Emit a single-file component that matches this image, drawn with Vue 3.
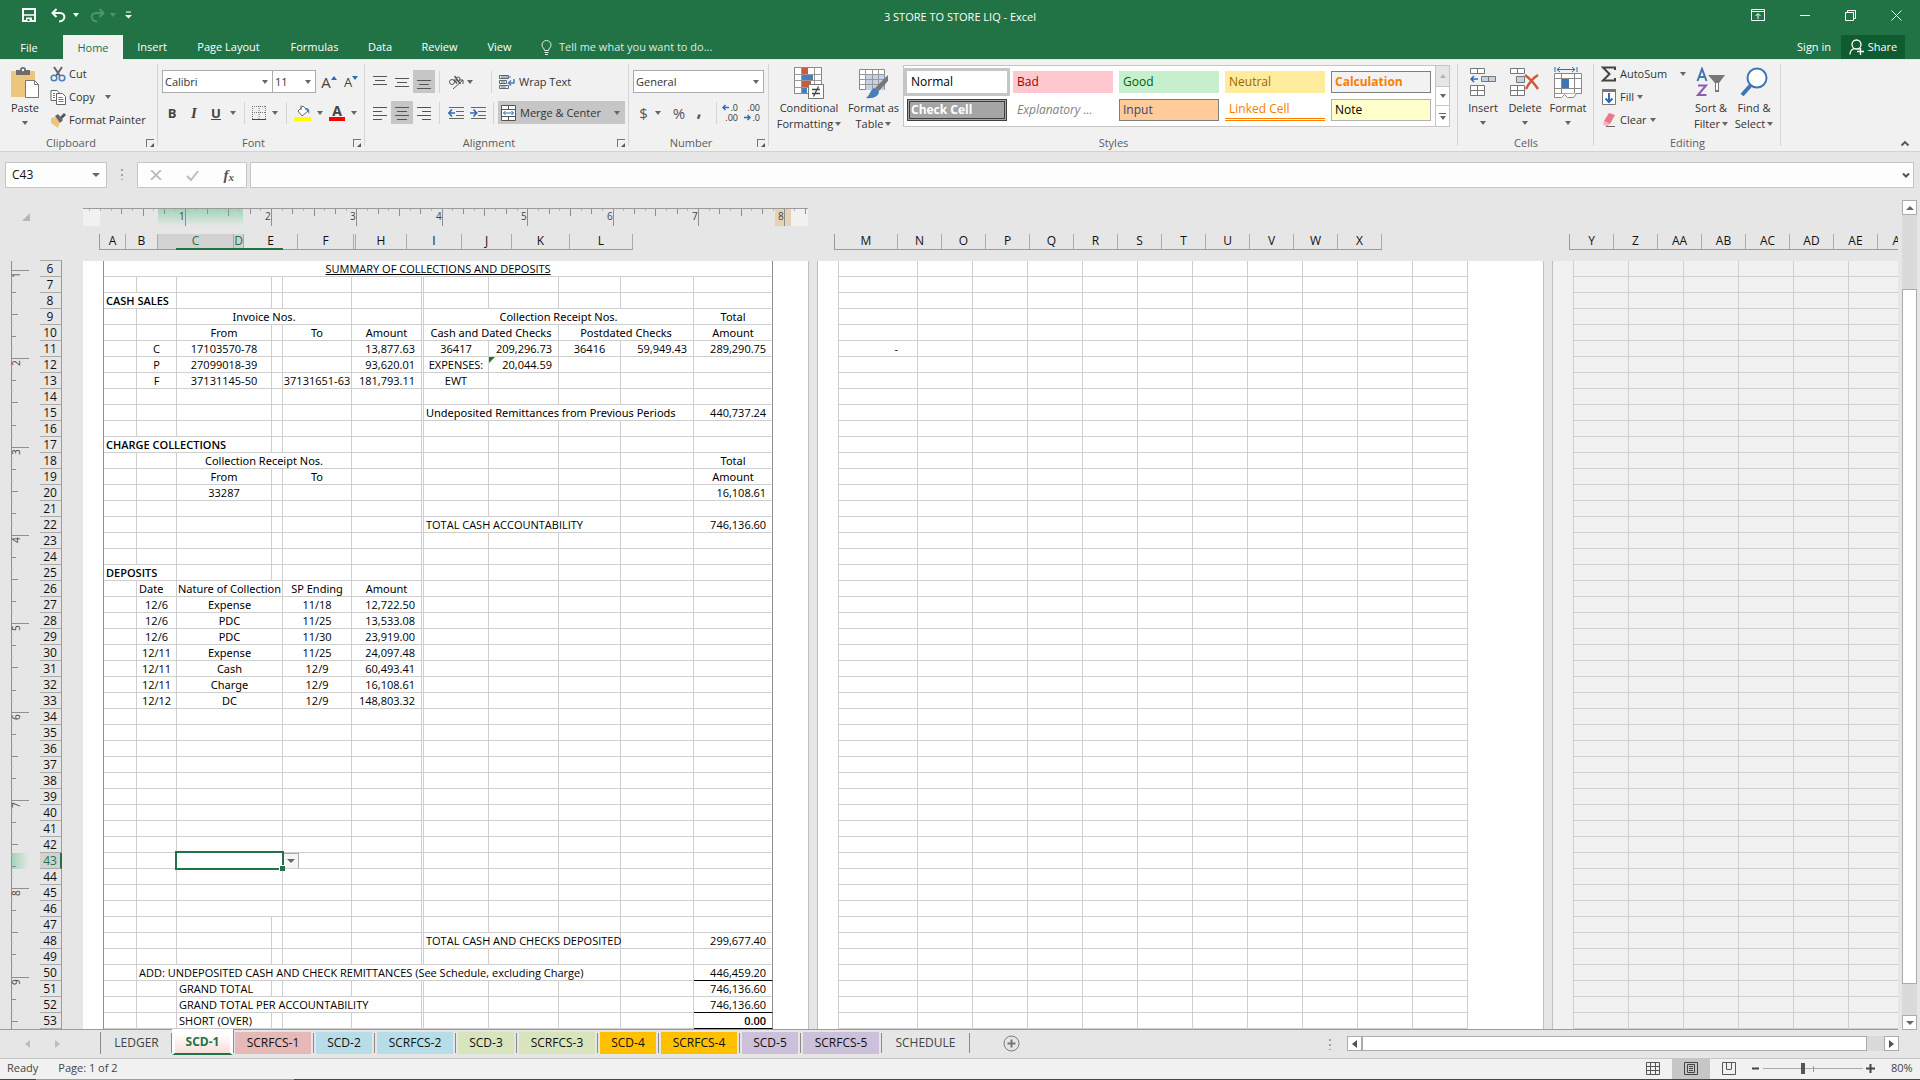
<script setup>
const tabs = [
  { name: 'Insert', w: 58 }, { name: 'Page Layout', w: 95 }, { name: 'Formulas', w: 77 },
  { name: 'Data', w: 54 }, { name: 'Review', w: 65 }, { name: 'View', w: 55 },
]

const styleCells = [
  { t: 'Normal', c: 'normal' }, { t: 'Bad', c: 'bad' }, { t: 'Good', c: 'good' },
  { t: 'Neutral', c: 'neutral' }, { t: 'Calculation', c: 'calculation' },
  { t: 'Check Cell', c: 'check' }, { t: 'Explanatory ...', c: 'explain' }, { t: 'Input', c: 'inputs' },
  { t: 'Linked Cell', c: 'linked' }, { t: 'Note', c: 'note' },
]

const headA = [
  { n: 'A', w: 26 }, { n: 'B', w: 32 }, { n: 'C', w: 76, on: true }, { n: 'D', w: 10, on: true },
  { n: 'E', w: 54 }, { n: 'F', w: 56 }, { n: '', w: 2 }, { n: 'H', w: 51 }, { n: 'I', w: 55 },
  { n: 'J', w: 50 }, { n: 'K', w: 58 }, { n: 'L', w: 63 },
]
const headB = [{ n: 'M', w: 63 }, ...'NOPQRSTUVWX'.split('').map((n) => ({ n, w: 44 }))]
const headC = ['Y', 'Z', 'AA', 'AB', 'AC', 'AD', 'AE', 'AF'].map((n) => ({ n, w: 44 }))

const colsA = [33, 40, 95, 11, 69, 70, 2, 65, 70, 62, 73, 79]
const colsB = [79, ...Array(10).fill(55)]
const colsC = Array(6).fill(55)

const rowNumbers = Array.from({ length: 48 }, (_, i) => i + 6)

// Filled cells of the first page: row -> list of [first column, span, text, classes]
const filled = {
  6: [[0, 12, 'SUMMARY OF COLLECTIONS AND DEPOSITS', 'mid under']],
  8: [[0, 2, 'CASH SALES', 'bold']],
  9: [[2, 3, 'Invoice Nos.', 'mid words'], [7, 4, 'Collection Receipt Nos.', 'mid words'], [11, 1, 'Total', 'mid words']],
  10: [[2, 1, 'From', 'mid words'], [4, 1, 'To', 'mid words'], [5, 1, 'Amount', 'mid words'], [7, 2, 'Cash and Dated Checks', 'mid words'], [9, 2, 'Postdated Checks', 'mid words'], [11, 1, 'Amount', 'mid words']],
  11: [[1, 1, 'C', 'mid'], [2, 1, '17103570-78', 'mid'], [5, 1, '13,877.63', 'end'], [7, 1, '36417', 'mid'], [8, 1, '209,296.73', 'end'], [9, 1, '36416', 'mid'], [10, 1, '59,949.43', 'end'], [11, 1, '289,290.75', 'end']],
  12: [[1, 1, 'P', 'mid'], [2, 1, '27099018-39', 'mid'], [5, 1, '93,620.01', 'end'], [7, 1, 'EXPENSES:', 'mid'], [8, 1, '20,044.59', 'end flag']],
  13: [[1, 1, 'F', 'mid'], [2, 1, '37131145-50', 'mid'], [4, 1, '37131651-63', 'mid'], [5, 1, '181,793.11', 'end'], [7, 1, 'EWT', 'mid']],
  15: [[7, 4, 'Undeposited Remittances from Previous Periods', 'words'], [11, 1, '440,737.24', 'end']],
  17: [[0, 3, 'CHARGE COLLECTIONS', 'bold']],
  18: [[2, 3, 'Collection Receipt Nos.', 'mid words'], [11, 1, 'Total', 'mid words']],
  19: [[2, 1, 'From', 'mid words'], [4, 1, 'To', 'mid words'], [11, 1, 'Amount', 'mid words']],
  20: [[2, 1, '33287', 'mid'], [11, 1, '16,108.61', 'end']],
  22: [[7, 3, 'TOTAL CASH ACCOUNTABILITY', ''], [11, 1, '746,136.60', 'end']],
  25: [[0, 2, 'DEPOSITS', 'bold']],
  26: [[1, 1, 'Date', 'words'], [2, 2, 'Nature of Collection', 'mid words'], [4, 1, 'SP Ending', 'mid words'], [5, 1, 'Amount', 'mid words']],
  48: [[7, 3, 'TOTAL CASH AND CHECKS DEPOSITED', 'spill'], [11, 1, '299,677.40', 'end']],
  50: [[1, 9, 'ADD: UNDEPOSITED CASH AND CHECK REMITTANCES (See Schedule, excluding Charge)', ''], [11, 1, '446,459.20', 'end rule']],
  51: [[2, 1, 'GRAND TOTAL', ''], [11, 1, '746,136.60', 'end']],
  52: [[2, 4, 'GRAND TOTAL PER ACCOUNTABILITY', ''], [11, 1, '746,136.60', 'end rule']],
  53: [[2, 1, 'SHORT (OVER)', ''], [11, 1, '0.00', 'end bold rule']],
}
const deposits = [
  ['12/6', 'Expense', '11/18', '12,722.50'],
  ['12/6', 'PDC', '11/25', '13,533.08'],
  ['12/6', 'PDC', '11/30', '23,919.00'],
  ['12/11', 'Expense', '11/25', '24,097.48'],
  ['12/11', 'Cash', '12/9', '60,493.41'],
  ['12/11', 'Charge', '12/9', '16,108.61'],
  ['12/12', 'DC', '12/9', '148,803.32'],
]
deposits.forEach((d, i) => {
  filled[27 + i] = [[1, 1, d[0], 'mid'], [2, 2, d[1], 'mid words'], [4, 1, d[2], 'mid'], [5, 1, d[3], 'end']]
})
for (let r = 34; r <= 46; r++) filled[r] = [[2, 2, '', r === 43 ? 'picked' : '']]

const rowsA = rowNumbers.map((n) => {
  const out = []
  let c = 0
  const list = filled[n] || []
  while (c < 12) {
    const hit = list.find((x) => x[0] === c)
    if (hit) {
      out.push({ span: hit[1], text: hit[2], cls: hit[3] })
      c += hit[1]
    } else {
      out.push({ span: 1, text: '', cls: '' })
      c++
    }
  }
  return { n, cells: out }
})

const tickLength = (i) => (i % 8 === 0 ? 18 : i % 4 === 0 ? 7 : i % 2 === 0 ? 5 : 2)
const hTicks = Array.from({ length: 68 }, (_, k) => k - 1).map((i) => ({
  x: Math.round(17 + i * 10.68), len: i === 0 ? 2 : tickLength(i), n: i > 0 && i % 8 === 0 ? i / 8 : '',
}))
const vTicks = Array.from({ length: 70 }, (_, k) => k + 8).map((i) => ({
  y: Math.round(9 + (i - 8) * 11.04), len: tickLength(i), n: i % 8 === 0 ? i / 8 : '',
}))

const sheets = [
  { n: 'SCRFCS-1', c: 'rose', w: 76 }, { n: 'SCD-2', c: 'aqua', w: 56 }, { n: 'SCRFCS-2', c: 'aqua', w: 76 },
  { n: 'SCD-3', c: 'lime', w: 56 }, { n: 'SCRFCS-3', c: 'lime', w: 76 }, { n: 'SCD-4', c: 'gold', w: 56 },
  { n: 'SCRFCS-4', c: 'gold', w: 76 }, { n: 'SCD-5', c: 'lilac', w: 56 }, { n: 'SCRFCS-5', c: 'lilac', w: 76 },
  { n: 'SCHEDULE', c: 'plain', w: 83 },
]
</script>

<template>
  <div class="app">
    <header class="top">
      <div class="titlebar">
        <div class="quick">
          <button aria-label="Save"><svg width="14" height="14" viewBox="0 0 14 14"><path d="M1 1h12v12H1z" fill="none" stroke="#fff" stroke-width="2" /><path d="M2 7h10" stroke="#fff" stroke-width="1.5" /><path d="M4 9.5h6V14H4z" fill="#fff" /><path d="M5.5 11h2v2h-2z" fill="#217346" /></svg></button>
          <button aria-label="Undo" class="undo"><svg width="16" height="15" viewBox="0 0 16 15" fill="none" stroke="#fff" stroke-width="2"><path d="M5.5 1L1.5 5l4 4M2 5h7c6 0 6 8-1 8.5" /></svg></button>
          <i class="arr white"></i>
          <button aria-label="Redo" class="redo"><svg width="16" height="15" viewBox="0 0 16 15" fill="none" stroke="#4f9470" stroke-width="2"><path d="M10.500 1l4 4-4 4M14 5H7c-6 0-6 8 1 8.500" /></svg></button>
          <i class="arr dim"></i>
          <button aria-label="Customize Quick Access Toolbar" class="custom"><svg width="7" height="8" viewBox="0 0 7 8"><path d="M1 1h5" stroke="#fff" /><path d="M0 4h7L3.500 7.500z" fill="#fff" /></svg></button>
        </div>
        <h1>3 STORE TO STORE LIQ - Excel</h1>
        <div class="winbtns">
          <button aria-label="Ribbon Display Options"><svg width="14" height="12" viewBox="0 0 14 12" fill="none" stroke="#fff"><path d="M.5.5h13v11H.5zM.5 2.500h13M7 10V5M4.500 7L7 4.500 9.500 7" /></svg></button>
          <button aria-label="Minimize"><svg width="10" height="10" viewBox="0 0 10 10"><path d="M0 5.500h10" stroke="#fff" /></svg></button>
          <button aria-label="Restore"><svg width="11" height="11" viewBox="0 0 11 11" fill="none" stroke="#fff"><path d="M.5 2.500h8v8h-8zM2.500 2.500v-2h8v8h-2" /></svg></button>
          <button aria-label="Close"><svg width="11" height="11" viewBox="0 0 11 11"><path d="M.5.5l10 10M10.500.5l-10 10" stroke="#fff" /></svg></button>
        </div>
      </div>
      <nav class="tabs">
        <button class="tab file">File</button>
        <button class="tab home">Home</button>
        <button v-for="t in tabs" :key="t.name" class="tab" :style="{ width: t.w + 'px' }">{{ t.name }}</button>
        <button class="tell"><svg width="11" height="15" viewBox="0 0 11 15" fill="none" stroke="#e0ede5"><path d="M3.500 10.500C3.500 8 1 8 1 5a4.500 4.500 0 0 1 9 0c0 3-2.500 3-2.500 5.500zM3.500 12.500h4M4 14.500h3" /></svg>Tell me what you want to do...</button>
        <span class="grow"></span>
        <a href="#" class="signin">Sign in</a>
        <button class="share"><svg width="16" height="16" viewBox="0 0 16 16" fill="none" stroke="#fff" stroke-width="1.300"><circle cx="7.500" cy="5.500" r="4.500" /><path d="M1 15.500c0-3 1.500-5 4-6M9.500 9.500l1 1M8 12.500h7M11.500 9v7" /></svg>Share</button>
      </nav>
    </header>

    <section class="ribbon">
      <div class="group g-clip">
        <div class="body">
          <button class="big paste">
            <svg width="30" height="32" viewBox="0 0 30 32"><path d="M1 4h24v26H1z" fill="#edc57c" /><path d="M6 3h4a3 3 0 0 1 6 0h4v5H6z" fill="#6d6d6d" /><circle cx="13" cy="3" r="1.200" fill="#fff" /><path d="M15.500 13.500h9l4 4v13h-13z" fill="#fff" stroke="#777" /><path d="M24.500 13.500v4h4" fill="none" stroke="#777" /></svg>
            <span>Paste</span><i class="arr"></i>
          </button>
          <div class="stack">
            <button><svg width="16" height="16" viewBox="0 0 16 16"><path d="M4 1l6 9M12 1L6 10" stroke="#666" stroke-width="2" /><circle cx="4" cy="12" r="2.800" fill="none" stroke="#4a7ebb" stroke-width="1.500" /><circle cx="12" cy="12" r="2.800" fill="none" stroke="#4a7ebb" stroke-width="1.500" /></svg>Cut</button>
            <button><svg width="16" height="16" viewBox="0 0 16 16" fill="#fff" stroke="#666"><path d="M1 1.500h6l2 2v8H1z" /><path d="M6.500 4.500h6l3 3v8h-9z" /><path d="M8.500 8.500h4M8.500 10.500h5M8.500 12.500h5M3 4.500h2M3 6.500h2M3 8.500h2" stroke="#4a7ebb" /></svg>Copy<i class="arr far"></i></button>
            <button><svg width="16" height="16" viewBox="0 0 16 16"><path d="M1 6l4-1 5 5-2 6-7-5z" fill="#edc57c" /><path d="M5 4l3-2 5 6-3 3z" fill="#666" /><path d="M10 5l4-4 2 2-4 4z" fill="#555" /></svg>Format Painter</button>
          </div>
        </div>
        <footer class="with-launch">Clipboard<i class="launch"></i></footer>
      </div>

      <div class="group g-font">
        <div class="lines">
          <div class="line">
            <label class="combo w111"><select aria-label="Font"><option>Calibri</option></select><i class="arr"></i></label>
            <label class="combo w43"><select aria-label="Font size"><option>11</option></select><i class="arr"></i></label>
            <button class="glyph big-a">A<svg width="6" height="4"><path d="M0 4h6L3 0z" fill="#2b6cb5" /></svg></button>
            <button class="glyph small-a">A<svg width="6" height="4"><path d="M0 0h6L3 4z" fill="#2b6cb5" /></svg></button>
          </div>
          <div class="line low">
            <button class="letter b">B</button><button class="letter i">I</button><button class="letter u">U</button><i class="arr"></i>
            <s></s>
            <button class="tool"><svg width="14" height="14" viewBox="0 0 14 14" fill="none" stroke="#777"><path d="M.5 0v13M13.500 0v13M7 0v13M0 .5h14M0 6.500h14" stroke-dasharray="1 1" /><path d="M0 13.500h14" stroke="#444" /></svg></button><i class="arr"></i>
            <s></s>
            <button class="tool"><svg width="17" height="17" viewBox="0 0 17 17"><path d="M4 7l5-5 5 5-6 5z" fill="#fff" stroke="#666" /><path d="M7 6V1.500" stroke="#666" /><path d="M12 4c3 0 4 3 3 6-1-2-1-4-4-4z" fill="#4a7ebb" /><path d="M0 13h17v4H0z" fill="#ff0" /></svg></button><i class="arr"></i>
            <button class="tool fontcolor"><b>A</b></button><i class="arr"></i>
          </div>
        </div>
        <footer class="with-launch">Font<i class="launch"></i></footer>
      </div>

      <div class="group g-align">
        <div class="lines">
          <div class="line">
            <button class="sq"><svg width="14" height="14"><path d="M0 1.500h14M2 5.500h10M0 9.500h14" stroke="#555" /></svg></button>
            <button class="sq"><svg width="14" height="14"><path d="M0 3.500h14M2 7.500h10M0 11.500h14" stroke="#555" /></svg></button>
            <button class="sq on"><svg width="14" height="14"><path d="M0 5.500h14M2 9.500h10M0 13.500h14" stroke="#555" /></svg></button>
            <s></s>
            <button class="tool orient"><svg width="17" height="16" viewBox="0 0 17 16" fill="none" stroke="#555"><circle cx="4" cy="8" r="2.500" /><path d="M6 5.500l3 4M6.500 2l6 8" stroke-width="1.300" /><circle cx="10" cy="5" r="2" /><path d="M5 15L15 6M11.500 6H15v4" /></svg></button><i class="arr"></i>
            <s class="third"></s>
            <button class="wide"><svg width="16" height="16" viewBox="0 0 16 16" fill="none" stroke="#666"><path d="M.5 1.500h9v3h-9zM.5 6.500h7v3h-7zM.5 11.500h9v3h-9z" /><path d="M2 3h10M2 8h4M2 13h5" stroke="#4a7ebb" /><path d="M15 5v4h-5M12 6.500L9.500 9 12 11.500" stroke="#4a7ebb" stroke-width="1.500" /></svg>Wrap Text</button>
          </div>
          <div class="line low">
            <button class="sq"><svg width="14" height="14"><path d="M0 1.500h14M0 5.500h9M0 9.500h14M0 13.500h9" stroke="#555" /></svg></button>
            <button class="sq on"><svg width="14" height="14"><path d="M0 1.500h14M2 5.500h10M0 9.500h14M2 13.500h10" stroke="#555" /></svg></button>
            <button class="sq"><svg width="14" height="14"><path d="M0 1.500h14M5 5.500h9M0 9.500h14M5 13.500h9" stroke="#555" /></svg></button>
            <s></s>
            <button class="tool"><svg width="16" height="14" viewBox="0 0 16 14" fill="none"><path d="M1 1.500h15M8 5.500h8M8 9.500h8M1 12.500h15" stroke="#666" /><path d="M7 7H1M4 3.500L.800 7 4 10.500" stroke="#2b6cb5" stroke-width="1.600" /></svg></button>
            <button class="tool second"><svg width="16" height="14" viewBox="0 0 16 14" fill="none"><path d="M1 1.500h15M8 5.500h8M8 9.500h8M1 12.500h15" stroke="#666" /><path d="M0 7h6M3.500 3.500L6.700 7l-3.200 3.500" stroke="#2b6cb5" stroke-width="1.600" /></svg></button>
            <s class="third b"></s>
            <button class="wide on"><svg width="15" height="16" viewBox="0 0 15 16"><path d="M.5.5h14v15H.5zM.5 4.500h14M.5 11.500h14M7.500.5v4M7.500 11.500v4" fill="#fff" stroke="#555" /><path d="M2.500 8h10M4.500 6l-2 2 2 2M10.500 6l2 2-2 2" fill="none" stroke="#2b6cb5" /></svg>Merge &amp; Center<i class="arr"></i></button>
          </div>
        </div>
        <footer class="with-launch">Alignment<i class="launch"></i></footer>
      </div>

      <div class="group g-num">
        <div class="lines">
          <div class="line">
            <label class="combo w131"><select aria-label="Number format"><option>General</option></select><i class="arr"></i></label>
          </div>
          <div class="line low nums">
            <button class="sym">$</button><i class="arr"></i><button class="sym pct">%</button><button class="sym comma">,</button>
            <s></s>
            <button class="dec"><span><svg width="7" height="7" viewBox="0 0 7 7"><path d="M7 3.500H1M3.500 1L1 3.500 3.500 6" fill="none" stroke="#2b6cb5" stroke-width="1.500" /></svg>.0</span><span>.00</span></button>
            <button class="dec"><span>.00</span><span><svg width="7" height="7" viewBox="0 0 7 7"><path d="M0 3.500h6M3.500 1L6 3.500 3.500 6" fill="none" stroke="#2b6cb5" stroke-width="1.500" /></svg>.0</span></button>
          </div>
        </div>
        <footer class="with-launch">Number<i class="launch"></i></footer>
      </div>

      <div class="group g-style">
        <div class="body">
          <button class="big cond">
            <svg width="30" height="32" viewBox="0 0 30 32"><path d="M.5.5h27v26H.5z" fill="#fff" stroke="#888" /><path d="M8 1h6v6H8zM8 14h9v6H8z" fill="#d0593c" /><path d="M8 8h11v5H8zM8 20h5v6H8z" fill="#4a7ebb" /><path d="M7.500 0v26M.5 7.500h27M.5 13.500h27M.5 20.500h27M20.500 0v20" stroke="#999" /><path d="M14.500 17.500h15v14h-15z" fill="#fff" stroke="#777" /><path d="M18 22.500h8M18 26.500h8M24.500 19.500l-5 10" stroke="#444" stroke-width="1.300" /></svg>
            <span>Conditional</span><span>Formatting<i class="arr"></i></span>
          </button>
          <button class="big fmt">
            <svg width="30" height="32" viewBox="0 0 30 32"><path d="M.5 2.500h25v20H.5z" fill="#fff" stroke="#888" /><path d="M7 8h18v15H7z" fill="#c3d2e8" /><path d="M6.500 2.500v20M13.500 2.500v20M19.500 2.500v20M.5 7.500h25M.5 12.500h25M.5 17.500h25" stroke="#999" /><path d="M29 8v6l-9 10-4-3z" fill="#777" /><path d="M16 21c-5 1-4 6-9 10 8 1 13-2 13-7z" fill="#4a7ebb" /></svg>
            <span>Format as</span><span>Table<i class="arr"></i></span>
          </button>
          <div class="gallery">
            <div class="swatches">
              <button v-for="s in styleCells" :key="s.t" :class="s.c">{{ s.t }}</button>
            </div>
            <div class="gscroll"><button class="off" aria-label="Previous styles"><i class="arr up"></i></button><button aria-label="Next styles"><i class="arr"></i></button><button aria-label="More styles"><u></u><i class="arr"></i></button></div>
          </div>
        </div>
        <footer>Styles</footer>
      </div>

      <div class="group g-cells">
        <div class="body">
          <button class="big c1"><svg width="27" height="32" viewBox="0 0 27 32" fill="#fff" stroke="#777"><path d="M.5 1.500h14v5H.5zM7.500 1.500v5M.5 18.500h14v10H.5zM7.500 18.500v10M.5 23.500h14" /><path d="M11.500 9.500h14v5h-14zM18.500 9.500v5" fill="#c3d2e8" /><path d="M8 12H1M4 9l-3 3 3 3" fill="none" stroke="#2b6cb5" stroke-width="1.500" /></svg><span>Insert</span><i class="arr"></i></button>
          <button class="big c2"><svg width="30" height="32" viewBox="0 0 30 32" fill="#fff" stroke="#777"><path d="M.5 1.500h14v5H.5zM7.500 1.500v5M.5 18.500h14v10H.5zM7.500 18.500v10M.5 23.500h14" /><path d="M6.500 9.500h8v6h-8z" fill="#c3d2e8" /><path d="M15 8c4 3 9 8 13 14M28 8c-5 3-9 8-12 14" fill="none" stroke="#d0593c" stroke-width="2.500" /></svg><span>Delete</span><i class="arr"></i></button>
          <button class="big c3"><svg width="29" height="32" viewBox="0 0 29 32" fill="#fff" stroke="#888"><path d="M.5 6.500h27v20H.5zM7.500 6.500v20M20.500 6.500v20M.5 11.500h27M.5 21.500h27" /><path d="M8 12h7v9H8z" fill="#3f74b5" stroke="none" /><path d="M.5 27v3.500h7l3-3 3 3h6l3-4" /><path d="M1 0v5M23 0v5M3 2.500h18M6 0L3 2.500 6 5M18 0l3 2.500L18 5" fill="none" stroke="#2b6cb5" /></svg><span>Format</span><i class="arr"></i></button>
        </div>
        <footer>Cells</footer>
      </div>

      <div class="group g-edit">
        <div class="body">
          <div class="stack">
            <button><svg width="16" height="16" viewBox="0 0 16 16"><path d="M14 4V1.500H2L8.500 8 2 14.500h12V12" fill="none" stroke="#444" stroke-width="2" /></svg>AutoSum<i class="arr sum"></i></button>
            <button><svg width="16" height="16" viewBox="0 0 16 16"><path d="M1.500.5h13v15h-13z" fill="#fff" stroke="#777" /><path d="M1 0h14v3H1z" fill="#777" /><path d="M8 4v9M4.500 9.500L8 13l3.500-3.500" fill="none" stroke="#2b6cb5" stroke-width="2" /></svg>Fill<i class="arr near"></i></button>
            <button><svg width="16" height="16" viewBox="0 0 16 16"><path d="M8 1l6 2-5 9-6-3z" fill="#e8798c" /><path d="M3 9l6 3-3 2.500-4-2z" fill="#f3b3be" /><path d="M5 14.500h9" stroke="#666" /></svg>Clear<i class="arr near"></i></button>
          </div>
          <button class="big sort"><svg width="30" height="32" viewBox="0 0 30 32"><path d="M1.500 14L6 2l4.500 12M3 10h6" fill="none" stroke="#3f74b5" stroke-width="2" /><path d="M2 18.500h8L2 28h8.500" fill="none" stroke="#8e5bb5" stroke-width="2" /><path d="M12 8h17l-6 8v9h-4v-9z" fill="#777" /><path d="M20 16h2v7h-2z" fill="#fff" /></svg><span>Sort &amp;</span><span>Filter<i class="arr"></i></span></button>
          <button class="big find"><svg width="28" height="32" viewBox="0 0 28 32"><circle cx="17" cy="11" r="9.500" fill="#fff" stroke="#3f74b5" stroke-width="2" /><path d="M11 18L2 28" stroke="#3f74b5" stroke-width="4" /></svg><span>Find &amp;</span><span>Select<i class="arr"></i></span></button>
        </div>
        <footer>Editing</footer>
      </div>
      <span class="grow"></span>
      <button class="collapse" aria-label="Collapse the Ribbon"><svg width="10" height="7" viewBox="0 0 10 7"><path d="M1.500 5.500L5 2l3.500 3.500" fill="none" stroke="#555" stroke-width="1.800" /></svg></button>
    </section>

    <section class="formula">
      <label class="namebox"><input type="text" value="C43" aria-label="Name Box"><i class="arr wide5"></i></label>
      <span class="dots"></span>
      <div class="fxbox">
        <svg width="12" height="10" viewBox="0 0 12 10"><path d="M1 0l10 10M11 0L1 10" stroke="#bcbcbc" stroke-width="1.800" /></svg>
        <svg width="13" height="11" viewBox="0 0 13 11"><path d="M1 6l4 4 7-9" fill="none" stroke="#bcbcbc" stroke-width="2" /></svg>
        <span class="fx">f<sub>x</sub></span>
      </div>
      <label class="fbar"><input type="text" aria-label="Formula bar"><svg width="8" height="7" viewBox="0 0 8 7"><path d="M1 1.500l3 3 3-3" fill="none" stroke="#555" stroke-width="2" /></svg></label>
    </section>

    <main class="work">
      <div class="sheet">
        <div class="rulerrow">
          <div class="corner"><svg width="8" height="8"><path d="M8 0v8H0z" fill="#b5b5b5" /></svg></div>
          <div class="hruler">
            <span class="band edge"></span><span class="band sel"></span><span class="band tan"></span><span class="band edge last"></span>
            <svg width="725" height="18">
              <g v-for="t in hTicks" :key="t.x"><path :d="`M${t.x + 0.5} 0v${t.len}`" :stroke="t.len > 2 ? '#8f8f8f' : '#b5b5b5'" /><text v-if="t.n" :x="t.x - 6" y="11">{{ t.n }}</text></g>
            </svg>
          </div>
        </div>
        <div class="heads">
          <div class="hg first">
            <span v-for="h in headA" :key="h.n" :class="{ on: h.on }" :style="{ width: h.w + 'px' }">{{ h.n }}</span>
            <i class="selline"></i>
          </div>
          <div class="hg second"><span v-for="h in headB" :key="h.n" :style="{ width: h.w + 'px' }">{{ h.n }}</span></div>
          <div class="hg third"><span v-for="h in headC" :key="h.n" :style="{ width: h.w + 'px' }">{{ h.n }}</span></div>
        </div>
        <div class="pages">
          <div class="vruler">
            <span class="vsel"></span>
            <svg width="20" height="768">
              <path d="M.5 0v768" stroke="#8f8f8f" />
              <g v-for="t in vTicks" :key="t.y"><path :d="`M0 ${t.y + 0.5}h${t.len}`" :stroke="t.len > 2 ? '#8f8f8f' : '#b5b5b5'" /><text v-if="t.n" :transform="`translate(9 ${t.y + 8}) rotate(-90)`">{{ t.n }}</text></g>
            </svg>
          </div>
          <div class="rownums"><span v-for="n in rowNumbers" :key="n" :class="{ on: n === 43 }">{{ n }}</span></div>
          <div class="page one">
            <table>
              <colgroup><col v-for="(w, i) in colsA" :key="i" :style="{ width: w + 'px' }"></colgroup>
              <tbody>
                <tr v-for="r in rowsA" :key="r.n">
                  <td v-for="(c, i) in r.cells" :key="i" :colspan="c.span" :class="c.cls"><div v-if="c.text">{{ c.text }}</div><template v-if="c.cls === 'picked'"><span class="cursor"></span><button class="drop" aria-label="Choose from list"><i class="arr wide5"></i></button></template></td>
                </tr>
              </tbody>
            </table>
          </div>
          <div class="page two">
            <table>
              <colgroup><col v-for="(w, i) in colsB" :key="i" :style="{ width: w + 'px' }"></colgroup>
              <tbody><tr v-for="n in rowNumbers" :key="n"><td v-for="(w, i) in colsB" :key="i" class="end dash"><div v-if="n === 11 && i === 0">-</div></td></tr></tbody>
            </table>
          </div>
          <div class="page three">
            <table>
              <colgroup><col v-for="(w, i) in colsC" :key="i" :style="{ width: w + 'px' }"></colgroup>
              <tbody><tr v-for="n in rowNumbers" :key="n"><td v-for="(w, i) in colsC" :key="i"></td></tr></tbody>
            </table>
          </div>
        </div>
      </div>
      <div class="vscroll">
        <button aria-label="Scroll up"><i class="arr up wide5"></i></button>
        <div class="track"><div class="thumb"></div></div>
        <button aria-label="Scroll down"><i class="arr wide5"></i></button>
      </div>
    </main>

    <section class="sheettabs">
      <button class="nav" aria-label="Previous sheet"><svg width="5" height="8"><path d="M5 0v8L0 4z" fill="#bdbdbd" /></svg></button>
      <button class="nav" aria-label="Next sheet"><svg width="5" height="8"><path d="M0 0v8l5-4z" fill="#bdbdbd" /></svg></button>
      <button class="st ledger">LEDGER</button>
      <button class="st active">SCD-1</button>
      <button v-for="s in sheets" :key="s.n" class="st" :class="s.c" :style="{ width: s.w + 'px' }">{{ s.n }}</button>
      <button class="add" aria-label="New sheet"><svg width="17" height="17" viewBox="0 0 17 17" fill="none" stroke="#777"><circle cx="8.500" cy="8.500" r="7.500" /><path d="M8.500 4.500v8M4.500 8.500h8" stroke-width="2" /></svg></button>
      <span class="grow"></span>
      <span class="dots"></span>
      <div class="hscroll">
        <button aria-label="Scroll left"><svg width="5" height="8"><path d="M5 0v8L0 4z" fill="#555" /></svg></button>
        <div class="hthumb"></div><div class="hrest"></div>
        <button aria-label="Scroll right"><svg width="5" height="8"><path d="M0 0v8l5-4z" fill="#555" /></svg></button>
      </div>
    </section>

    <footer class="status">
      <span class="ready">Ready</span><span>Page: 1 of 2</span>
      <span class="grow"></span>
      <button aria-label="Normal view"><svg width="14" height="13" viewBox="0 0 14 13"><path d="M.5.5h13v12H.5zM4.500 0v13M9.500 0v13M0 4.500h14M0 8.500h14" fill="none" stroke="#555" /></svg></button>
      <button class="on" aria-label="Page Layout view"><svg width="14" height="13" viewBox="0 0 14 13"><path d="M.5.5h13v12H.5zM3.500 2.500h7v8h-7zM5 4.500h4M5 6.500h4M5 8.500h4" fill="none" stroke="#444" /></svg></button>
      <button aria-label="Page Break Preview"><svg width="14" height="13" viewBox="0 0 14 13"><path d="M.5.5h13v12H.5zM4.500 0v7M4.500 7.500h5M9.500 0v7" fill="none" stroke="#555" /></svg></button>
      <button class="zb out" aria-label="Zoom out"><svg width="7" height="9"><path d="M0 4.500h7" stroke="#444" stroke-width="2" /></svg></button>
      <input type="range" min="0" max="100" value="40" aria-label="Zoom">
      <button class="zb in" aria-label="Zoom in"><svg width="9" height="9"><path d="M0 4.500h9M4.500 0v9" stroke="#444" stroke-width="2" /></svg></button>
      <span class="pc">80%</span>
    </footer>
    <div class="edge-strip"><span></span></div>
  </div>
</template>

<style>
body { margin: 0; background: #e6e6e6; }
</style>

<style scoped>
* { box-sizing: border-box; }
.app { min-height: 100vh; display: flex; flex-direction: column; font: 11px/16px "Open Sans", "Noto Sans", sans-serif; color: #333; background: #e6e6e6; overflow: hidden; }
button { font: inherit; color: inherit; border: 0; background: none; padding: 0; display: flex; align-items: center; justify-content: center; white-space: nowrap; flex: none; }
input, select { font: inherit; color: inherit; border: 0; background: none; padding: 0; margin: 0; outline: 0; appearance: none; min-width: 0; border-radius: 0; }
svg { display: block; flex: none; }
.grow { flex: 1; }
.arr { flex: none; width: 0; height: 0; border: 3px solid transparent; border-top: 4px solid #666; border-bottom: 0; }
.arr.wide5 { border-width: 4px 4px 0; }
.arr.up { border-top: 0; border-bottom: 4px solid #666; }
.arr.white { border-top-color: #fff; }
.arr.dim { border-top-color: #4f9470; }

.top { background: #217346; color: #fff; height: 60px; display: flex; flex-direction: column; border-bottom: 1px solid #d9ede1; }
.titlebar { height: 35px; padding-bottom: 5px; display: grid; grid-template-columns: 1fr auto 1fr; align-items: center; }
.titlebar h1 { margin: 4px 0 0; font-size: 11px; font-weight: 400; line-height: 16px; }
.quick { display: flex; align-items: center; padding-left: 22px; }
.undo { margin: 0 6px 0 15px; }
.redo { margin: 0 5px 0 10px; }
.custom { margin-left: 9px; }
.winbtns { display: flex; justify-content: flex-end; gap: 35px; padding-right: 18px; }
.tabs { display: flex; height: 24px; align-items: stretch; }
.file { width: 63px; padding-right: 5px; padding-top: 1px; }
.home { width: 60px; background: #f1f1f1; color: #217346; height: 25px; }
.tell { gap: 7px; margin-left: 14px; color: #dcebe2; }
.signin { color: #fff; text-decoration: none; align-self: center; margin-right: 10px; }
.share { background: #0e5c2f; width: 64px; gap: 3px; margin-right: 15px; }

.ribbon { height: 92px; background: #f1f1f1; border-bottom: 1px solid #d2d2d2; display: flex; }
.group { position: relative; display: flex; flex-direction: column; justify-content: space-between; padding-top: 2px; flex: none; }
.group::after { content: ""; position: absolute; right: 0; top: 4px; bottom: 5px; width: 1px; background: #d5d5d5; }
.group > footer { height: 16px; display: flex; justify-content: center; color: #5c5c5c; }
.group > .with-launch { padding-right: 16px; }
.launch { position: absolute; right: 4px; bottom: 4px; width: 8px; height: 8px; border: 1px solid #777; border-right: 0; border-bottom: 0; }
.launch::after { content: ""; position: absolute; right: 0; bottom: 0; border: 2px solid transparent; border-right-color: #555; border-bottom-color: #555; }
.g-clip { width: 158px; } .g-font { width: 207px; } .g-align { width: 264px; } .g-num { width: 140px; }
.g-style { width: 689px; } .g-cells { width: 136px; } .g-edit { width: 187px; }
.body { display: flex; align-items: flex-start; }
.big { flex-direction: column; justify-content: flex-start; padding-top: 5px; height: 72px; line-height: 16px; }
.big svg { margin-bottom: 1px; }
.big span { display: flex; align-items: center; gap: 2px; }
.big > .arr { margin-top: 5px; }
.paste { width: 50px; }
.stack { display: flex; flex-direction: column; align-items: flex-start; }
.stack button { height: 23px; gap: 3px; }
.arr.far { margin-left: 7px; } .arr.sum { margin-left: 10px; }
.lines { padding-top: 8px; }
.line { display: flex; align-items: center; height: 23px; }
.low { margin-top: 8px; }
.g-font .line { padding-left: 4px; }
.g-font .low { padding-left: 3px; }
.combo { display: flex; align-items: center; background: #fff; border: 1px solid #ababab; height: 23px; padding: 0 4px 0 2px; }
.combo select { flex: 1; }
.combo + .combo { margin-left: -1px; }
.w111 { width: 111px; } .w43 { width: 44px; } .w131 { width: 131px; }
.glyph { align-items: center; color: #444; width: 22px; }
.glyph svg { align-self: flex-start; margin-top: 2px; }
.big-a { font-size: 15px; margin-left: 2px; }
.small-a { font-size: 13px; }
.letter { width: 22px; font-size: 13px; font-weight: 700; color: #444; }
.letter.i { font-style: italic; font-family: "Liberation Serif", serif; font-size: 15px; }
.letter.u { text-decoration: underline; }
.g-font .low .arr { margin-left: 3px; }
s { width: 1px; height: 22px; background: #d5d5d5; flex: none; }
.g-font .low s { margin: 0 7px 0 8px; }
.g-font .low .tool + .arr { margin-left: 6px; }
.g-font .low .arr + .fontcolor { margin-left: 6px; }
.fontcolor { width: 16px; height: 17px; border-bottom: 4px solid red; color: #444; font-size: 14px; line-height: 13px; }
.g-align .line { padding-left: 4px; }
.sq { width: 22px; height: 23px; }
.sq.on, .wide.on { background: #c6c6c6; }
.g-align s { margin: 0 8px 0 4px; }
.orient { margin-right: 2px; }
.g-align s.third { margin: 0 4px 0 18px; }
.g-align s.third.b { margin-left: 7px; }
.second { margin-left: 6px; }
.wide { height: 23px; gap: 4px; padding: 0 5px 0 3px; justify-content: flex-start; }
.wide.on { width: 127px; }
.wide .arr { margin-left: auto; }
.g-num .line { padding-left: 4px; }
.sym { font-size: 15px; color: #555; width: 21px; }
.sym.pct { margin-left: 4px; width: 22px; }
.sym.comma { width: 18px; font-weight: 700; font-size: 18px; padding-bottom: 6px; }
.nums .arr { margin-left: 1px; margin-right: 3px; }
.nums s { margin: 0 3px 0 8px; }
.dec { flex-direction: column; font-size: 9px; line-height: 10px; width: 22px; align-items: flex-end; padding-right: 4px; }
.dec span { display: flex; align-items: center; gap: 1px; }

.cond { width: 80px; } .fmt { width: 49px; }
.gallery { margin: 3px 0 0 5px; display: flex; background: #fff; border: 1px solid #c6c6c6; height: 62px; width: 547px; }
.swatches { flex: 1; display: grid; grid-template-columns: repeat(5, 100px); grid-auto-rows: 22px; gap: 6px; padding: 5px 0 0 3px; font-size: 12px; }
.swatches button { justify-content: flex-start; padding: 0 4px; }
.swatches .normal { color: #000; outline: 3px solid #c6c6c6; }
.bad { background: #ffc7ce; color: #9c0006; } .good { background: #c6efce; color: #006100; }
.neutral { background: #ffeb9c; color: #9c6500; }
.swatches .calculation { background: #f2f2f2; border: 1px solid #7f7f7f; color: #fa7d00; font-weight: 700; padding: 0 3px; }
.swatches .check { background: #a5a5a5; border: 3px double #3f3f3f; color: #fff; font-weight: 700; padding: 0 1px; }
.explain { color: #7f7f7f; font-style: italic; }
.swatches .inputs { background: #ffcc99; border: 1px solid #7f7f7f; color: #3f3f76; padding: 0 3px; }
.linked { color: #fa7d00; border-bottom: 3px double #ff8001; }
.swatches .note { background: #ffffcc; border: 1px solid #b2b2b2; color: #000; padding: 0 3px; }
.gscroll { width: 14px; border-left: 1px solid #c6c6c6; display: flex; flex-direction: column; }
.gscroll button { height: 19px; border-bottom: 1px solid #c6c6c6; flex-direction: column; gap: 2px; }
.gscroll button.off { height: 21px; background: #e6e6e6; }
.gscroll .off .arr { border-bottom-color: #b5b5b5; }
.gscroll button:last-child { border: 0; flex: 1; }
.gscroll u { width: 7px; height: 1px; background: #666; }
.c1, .c2 { width: 42px; } .c1 { margin-left: 4px; } .c3 { width: 44px; }
.g-edit .stack { padding-left: 7px; width: 96px; }
.sort { width: 42px; } .find { width: 44px; }
.collapse { align-self: flex-end; margin: 0 10px 4px 0; }

.formula { height: 36px; display: flex; padding: 10px 6px 0 5px; align-items: flex-start; }
.namebox, .fxbox, .fbar { height: 26px; background: #fdfdfd; border: 1px solid #c6c6c6; display: flex; align-items: center; }
.namebox { width: 102px; padding: 0 6px; font-size: 12px; color: #111; }
.namebox input { flex: 1; }
.dots { width: 2px; height: 11px; align-self: center; background: repeating-linear-gradient(#a0a0a0 0 2px, transparent 2px 5px); }
.formula .dots { margin: 0 14px; align-self: flex-start; margin-top: 7px; }
.fxbox { width: 110px; padding: 0 12px; justify-content: space-between; }
.fx { font: italic bold 15px/16px "Liberation Serif", serif; color: #555; }
.fx sub { font-size: 11px; line-height: 8px; vertical-align: -1px; }
.fbar { flex: 1; margin-left: 3px; padding: 0 3px; }
.fbar input { flex: 1; }

.work { display: flex; }
.sheet { flex: 1; min-width: 0; overflow: hidden; border-bottom: 1px solid #9b9b9b; }
.rulerrow { display: flex; padding-top: 20px; }
.corner { width: 83px; padding: 5px 0 0 22px; }
.hruler { position: relative; width: 725px; height: 18px; border-top: 1px solid #9b9b9b; }
.hruler svg { position: relative; height: 17px; }
.hruler text, .vruler text { font: 10px "Open Sans", sans-serif; fill: #444; }
.vruler svg { overflow: visible; }
.band { position: absolute; top: 0; height: 17px; }
.band.edge { left: 0; width: 17px; background: #f1f1f1; }
.band.sel { left: 75px; width: 85px; background: linear-gradient(#9fd5b7, #e6e6e6); }
.band.tan { right: 17px; width: 16px; background: #e6d3b5; }
.band.edge.last { left: auto; right: 0; }
.heads { display: flex; padding: 8px 0 11px 99px; }
.hg { position: relative; display: flex; flex: none; height: 16px; border-left: 1px solid #9b9b9b; border-bottom: 1px solid #9b9b9b; font-size: 12px; line-height: 14px; color: #111; }
.hg span { flex: none; text-align: center; border-right: 1px solid #ababab; }
.hg span.on { background: #d2d2d2; color: #217346; }
.hg .selline { position: absolute; left: 76px; width: 107px; bottom: -1px; height: 2px; background: #217346; }
.hg.second { margin-left: 201px; }
.hg.third { margin-left: 187px; flex: 1; min-width: 0; }
.pages { display: flex; }
.vruler { position: relative; width: 29px; margin-left: 11px; }
.vsel { position: absolute; left: 0; top: 592px; width: 18px; height: 16px; background: linear-gradient(90deg, #9fd5b7, #e6e6e6); }
.vruler svg { position: relative; }
.rownums { width: 22px; margin-right: 21px; border-right: 1px solid #9b9b9b; font-size: 12px; line-height: 15px; color: #111; box-shadow: 0 -1px 0 #ababab; }
.rownums span { display: block; height: 16px; padding-right: 1px; text-align: center; border-bottom: 1px solid #ababab; }
.rownums span.on { background: #d2d2d2; color: #217346; box-shadow: inset -1px 0 0 #217346, 1px 0 0 #217346; }
.page { flex: none; background: #fff; border-right: 1px solid #c0c0c0; }
.page.one { width: 726px; padding-left: 20px; }
.page.two { width: 727px; margin-left: 8px; border-left: 1px solid #c0c0c0; padding-left: 20px; }
.page.three { flex: 1; min-width: 0; overflow: hidden; margin-left: 8px; background: #f1f1f1; border: 0; border-left: 1px solid #c0c0c0; padding-left: 20px; }
table { table-layout: fixed; border-collapse: separate; border-spacing: 0; width: 1px; border-left: 1px solid #cfcfcf; }
.one table { border-left-color: #8f8f8f; width: 670px; }
.two table { width: 630px; }
.three table { width: 331px; }
td { position: relative; height: 16px; padding: 0; border-right: 1px solid #cfcfcf; border-bottom: 1px solid #cfcfcf; font-size: 11px; line-height: 15px; color: #000; }
.one td:last-child { border-right-color: #8f8f8f; }
td div { display: flex; height: 15px; padding: 0 2px; white-space: nowrap; overflow: hidden; }
td.mid div { justify-content: center; padding: 0; }
td.end div { justify-content: flex-end; padding-right: 6px; }
td.dash div { padding-right: 19px; }
td.spill div { overflow: visible; }
td.words { font-family: "Noto Sans", "Open Sans", sans-serif; }
td.bold { font-weight: 600; }
td.under { text-decoration: underline; }
td.rule { border-bottom-color: #000; }
.flag::before { content: ""; position: absolute; left: 0; top: 0; border: 3px solid #1b7a2f; border-right-color: transparent; border-bottom-color: transparent; }
.cursor { position: absolute; left: -2px; top: -2px; width: 109px; height: 19px; border: 2px solid #217346; z-index: 1; }
.cursor::after { content: ""; position: absolute; right: -3px; bottom: -3px; width: 5px; height: 5px; background: #217346; border: 1px solid #fff; border-width: 1px 0 0 1px; }
.drop { position: absolute; left: 106px; top: 0; width: 16px; height: 16px; background: #f5f5f5; border: 1px solid #ababab; }
.vscroll { width: 22px; padding: 12px 3px 0 4px; display: flex; flex-direction: column; }
.vscroll button { height: 15px; background: #fff; border: 1px solid #ababab; }
.track { flex: 1; background: #dadada; padding: 74px 0 31px; display: flex; }
.thumb { flex: 1; background: #fff; border: 1px solid #ababab; }

.sheettabs { height: 29px; display: flex; align-items: flex-start; border-bottom: 1px solid #c6c6c6; font-size: 12px; }
.nav { margin: 10px 0 0 25px; }
.st { position: relative; height: 22px; margin: 2px 5px 0 0; color: #111; }
.st::after { content: ""; position: absolute; right: -3px; top: 1px; height: 20px; width: 1px; background: #8a8a8a; }
.nav + .nav { margin-right: 40px; }
.ledger { width: 72px; margin-right: 0; border-left: 1px solid #8a8a8a; color: #444; }
.ledger::after { right: 0; }
.active { height: 25px; width: 61px; margin: 0 2px 0 0; background: linear-gradient(#fff 20%, #f7dcda); border: 0 solid #fff; border-width: 0 3px 3px; box-shadow: 0 -1px 0 #fff; color: #217346; font-weight: 700; border-bottom: 2px solid #217346; }
.active::after { right: -4px; height: 23px; top: 0; }
.rose { background: #e6b8b7; } .aqua { background: #b7dee8; } .lime { background: #d8e4bc; } .gold { background: #ffc000; } .lilac { background: #ccc0da; } .plain { color: #444; }
.add { margin: 5px 0 0 31px; }
.sheettabs > .dots { margin: 0 16px 0 0; }
.hscroll { display: flex; width: 552px; height: 15px; margin: 6px 21px 0 0; }
.hscroll button { width: 15px; background: #fff; border: 1px solid #ababab; }
.hthumb { flex: 1; background: #fff; border: 1px solid #ababab; }
.hrest { width: 17px; background: #dadada; }

.status { height: 20px; background: #f1f1f1; display: flex; align-items: center; color: #444; padding-left: 7px; }
.status > span { padding-bottom: 2px; }
.ready { margin-right: 20px; }
.status button { width: 38px; height: 20px; padding-bottom: 1px; }
.status button.on { background: #c6c6c6; }
.status .zb { width: 9px; }
.status .out { margin-left: 3px; margin-right: 3px; }
.status .in { margin-left: 3px; margin-right: 16px; }
.status input { width: 100px; height: 19px; margin-bottom: 1px; background: linear-gradient(#999, #999) 50% 50% / 1px 6px no-repeat, linear-gradient(#ababab, #ababab) 0 50% / 100% 1px no-repeat; }
.status input::-webkit-slider-thumb { appearance: none; width: 4px; height: 11px; background: #555; border-radius: 0; }
.pc { width: 29px; }
.edge-strip { height: 2px; background: #45454a; padding-left: 36px; }
.edge-strip span { display: block; width: 258px; height: 2px; background: #a0a0a0; }
</style>
